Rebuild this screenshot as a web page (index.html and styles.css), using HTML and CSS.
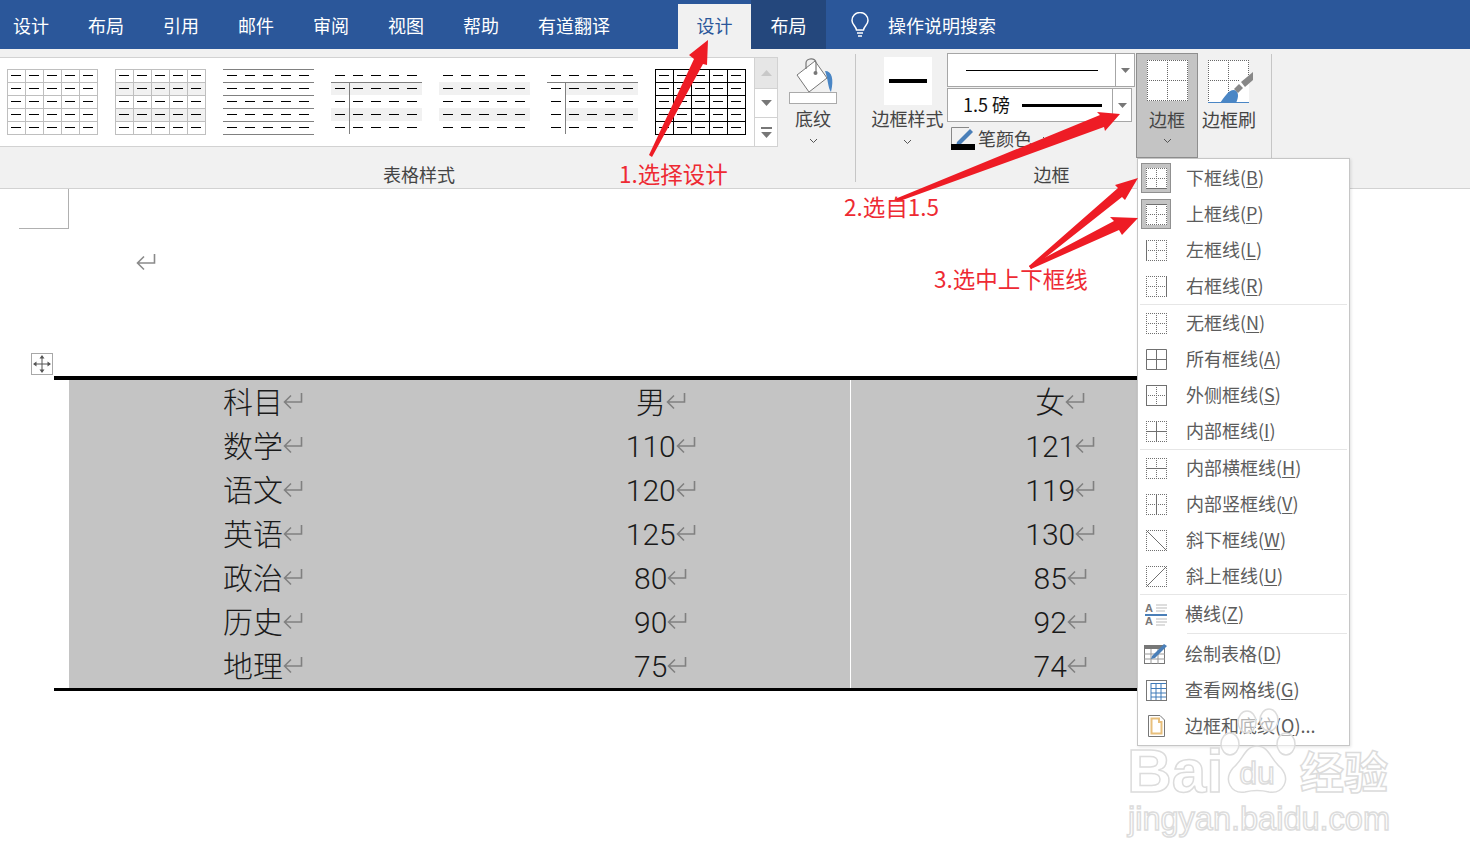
FILE: index.html
```html
<!DOCTYPE html>
<html lang="zh-CN">
<head>
    <meta charset="UTF-8">
    <meta name="viewport" content="width=device-width, initial-scale=1.0">
    <title>表格边框设置</title>
    <link rel="stylesheet" href="styles.css">
</head>
<body>
    <!-- shared svg pieces -->
    <svg class="defs" width="0" height="0">
        <defs>
            <pattern id="dash" width="18" height="13" patternUnits="userSpaceOnUse">
                <rect x="4" y="6" width="10" height="1" fill="#000"/>
            </pattern>
            <symbol id="ret" viewBox="0 0 20 18">
                <path d="M18.5 1V10H2M8 3.5L1.5 10L8 16.5" fill="none" stroke="currentColor" stroke-width="1.6"/>
            </symbol>
            <symbol id="chev" viewBox="0 0 9 6">
                <path d="M1 1L4.5 4.5L8 1" fill="none" stroke="#555" stroke-width="1"/>
            </symbol>
            <symbol id="drop" viewBox="0 0 9 5">
                <path d="M0 0H9L4.5 5Z" fill="#777"/>
            </symbol>
            <symbol id="bd" viewBox="0 0 21 21">
                <path class="dots" d="M0 .5H21M0 10.5H21M0 20.5H21M.5 0V21M10.5 0V21M20.5 0V21"/>
            </symbol>
        </defs>
    </svg>

    <header class="tabs">
        <span class="tab">设计</span>
        <span class="tab">布局</span>
        <span class="tab">引用</span>
        <span class="tab">邮件</span>
        <span class="tab">审阅</span>
        <span class="tab">视图</span>
        <span class="tab">帮助</span>
        <span class="tab">有道翻译</span>
        <span class="tab-active">设计</span>
        <span class="tab-dark">布局</span>
        <span class="tab-search">
            <svg width="20" height="26" viewBox="0 0 20 26" fill="none" stroke="#fff" stroke-width="1.5">
                <path d="M6.5 18C6 14 2 12.500 2 8.500A8 8 0 0 1 18 8.500C18 12.500 14 14 13.500 18Z"/>
                <path d="M7 21H13M8 24H12"/>
            </svg>
            操作说明搜索
        </span>
    </header>

    <section class="ribbon">
        <div class="group-styles">
            <div class="group-top styles-top">
                <div class="gallery">
                    <svg class="thumb" viewBox="0 0 91 66">
                        <rect width="91" height="66" fill="url(#dash)"/>
                        <path class="line-light" d="M.5 0V66M18.5 0V66M36.500 0V66M54.500 0V66M72.500 0V66M90.500 0V66M0 .5H91M0 13.500H91M0 26.500H91M0 39.500H91M0 52.500H91M0 65.500H91"/>
                    </svg>
                    <svg class="thumb" viewBox="0 0 91 66">
                        <rect y="13" width="91" height="13" fill="#f1f1f1"/>
                        <rect y="39" width="91" height="13" fill="#f1f1f1"/>
                        <rect width="91" height="66" fill="url(#dash)"/>
                        <path class="line-light" d="M.5 0V66M18.5 0V66M36.500 0V66M54.500 0V66M72.500 0V66M90.500 0V66M0 .5H91M0 13.500H91M0 26.500H91M0 39.500H91M0 52.500H91M0 65.500H91"/>
                    </svg>
                    <svg class="thumb" viewBox="0 0 91 66">
                        <rect width="91" height="66" fill="url(#dash)"/>
                        <path class="line-dark" d="M0 .5H91M0 13.500H91M0 26.500H91M0 39.500H91M0 52.500H91M0 65.500H91"/>
                    </svg>
                    <svg class="thumb" viewBox="0 0 91 66">
                        <rect y="13" width="91" height="13" fill="#f1f1f1"/>
                        <rect y="39" width="91" height="13" fill="#f1f1f1"/>
                        <rect width="91" height="66" fill="url(#dash)"/>
                        <path class="line-dark" d="M0 13.500H91M18.500 13V65"/>
                    </svg>
                    <svg class="thumb" viewBox="0 0 91 66">
                        <rect y="13" width="91" height="13" fill="#f1f1f1"/>
                        <rect y="39" width="91" height="13" fill="#f1f1f1"/>
                        <rect width="91" height="66" fill="url(#dash)"/>
                    </svg>
                    <svg class="thumb" viewBox="0 0 91 66">
                        <rect x="18" y="13" width="73" height="13" fill="#f1f1f1"/>
                        <rect x="18" y="39" width="73" height="13" fill="#f1f1f1"/>
                        <rect width="91" height="66" fill="url(#dash)"/>
                        <path class="line-dark" d="M0 13.500H91M18.500 13V65"/>
                    </svg>
                    <svg class="thumb" viewBox="0 0 91 66">
                        <rect width="91" height="66" fill="url(#dash)"/>
                        <path class="line-black" d="M.5 0V66M18.5 0V66M36.500 0V66M54.500 0V66M72.500 0V66M90.500 0V66M0 .5H91M0 13.500H91M0 26.500H91M0 39.500H91M0 52.500H91M0 65.500H91"/>
                    </svg>
                </div>
                <div class="gallery-scroll">
                    <div class="scroll-btn scroll-off"><svg width="11" height="6" viewBox="0 0 11 6"><path d="M0 6H11L5.500 0Z" fill="#c8c8c8"/></svg></div>
                    <div class="scroll-btn"><svg class="drop" width="11" height="6"><use href="#drop"/></svg></div>
                    <div class="scroll-btn scroll-more">
                        <span class="more-bar"></span>
                        <svg class="drop" width="11" height="6"><use href="#drop"/></svg>
                    </div>
                </div>
                <div class="shade-btn">
                    <svg width="48" height="47" viewBox="0 0 48 47">
                        <path d="M36 14C43 14 45 22 42 35C39 31 39 22 36 14Z" fill="#4a86c5"/>
                        <path d="M8 18L26 4L38 21L20 35Z" fill="#fff" stroke="#777"/>
                        <path d="M17 12V6C17 1 27 0 27 6V16" fill="none" stroke="#777" stroke-width="1.2"/>
                        <circle cx="26.500" cy="16" r="2" fill="#777"/>
                        <rect x=".5" y="35.500" width="47" height="11" fill="#fff" stroke="#aaa"/>
                    </svg>
                    <span class="btn-label">底纹</span>
                    <svg class="chev" width="9" height="6"><use href="#chev"/></svg>
                </div>
            </div>
            <div class="group-label styles-label">表格样式</div>
        </div>
        <div class="group-sep"></div>
        <div class="group-borders">
            <div class="group-top borders-top">
                <div class="style-btn">
                    <div class="swatch"><span class="swatch-line"></span></div>
                    <span class="btn-label">边框样式</span>
                    <svg class="chev" width="9" height="6"><use href="#chev"/></svg>
                </div>
                <div class="pen-col">
                    <div class="combo combo-type">
                        <div class="combo-main"><span class="pen-thin"></span></div>
                        <div class="combo-drop"><svg width="9" height="5"><use href="#drop"/></svg></div>
                    </div>
                    <div class="combo combo-weight">
                        <div class="combo-main"><span class="weight-text">1.5 磅</span><span class="pen-thick"></span></div>
                        <div class="combo-drop"><svg width="9" height="5"><use href="#drop"/></svg></div>
                    </div>
                    <div class="pen-color">
                        <svg width="24" height="24" viewBox="0 0 24 24">
                            <path d="M.5 17V.5H18" fill="none" stroke="#888"/>
                            <path d="M6 15L19 2L22 5L9 18L5 19Z" fill="#4a7fb8"/>
                            <rect y="17" width="24" height="6" fill="#000"/>
                        </svg>
                        <span>笔颜色</span>
                        <svg class="chev" width="9" height="6"><use href="#chev"/></svg>
                    </div>
                </div>
                <div class="borders-btn">
                    <svg width="41" height="41" viewBox="0 0 41 41">
                        <rect width="41" height="41" fill="#fff"/>
                        <path class="dots-dark" d="M0 .5H41M0 20.500H41M0 40.500H41M.5 0V41M20.500 0V41M40.500 0V41"/>
                    </svg>
                    <span class="btn-label">边框</span>
                    <svg class="chev" width="9" height="6"><use href="#chev"/></svg>
                </div>
                <div class="brush-btn">
                    <svg width="46" height="44" viewBox="0 0 46 44">
                        <rect width="41" height="42" fill="#fff"/>
                        <path class="dots-dark" d="M0 .5H41M0 20.500H32M.5 0V42M20.500 0V36M40.500 0V16"/>
                        <path d="M0 42.500H41" stroke="#4a86c5" fill="none"/>
                        <path d="M12 43C16 38 20 30 26 30C31 31 31 37 28 43Z" fill="#4a86c5"/>
                        <path d="M26 29L31 24L35 28L30 33Z" fill="#888"/>
                        <path d="M33 22L45 12L45 20L37 27Z" fill="#888"/>
                    </svg>
                    <span class="btn-label">边框刷</span>
                </div>
            </div>
            <div class="group-label borders-label">边框</div>
        </div>
        <div class="group-sep sep-short"></div>
    </section>

    <main class="doc">
        <div class="page-corner"></div>
        <svg class="page-ret" width="20" height="18"><use href="#ret"/></svg>
        <div class="move-handle">
            <svg width="18" height="18" viewBox="0 0 18 18">
                <path d="M9 1V17M1 9H17" stroke="#555" fill="none"/>
                <path d="M9 0L11.500 3.500H6.500ZM9 18L11.500 14.500H6.500ZM0 9L3.500 6.500V11.500ZM18 9L14.500 6.500V11.500Z" fill="#555"/>
            </svg>
        </div>
        <div class="table-wrap">
            <table class="score-table">
                <tr><td>科目<svg class="ret"><use href="#ret"/></svg></td><td>男<svg class="ret"><use href="#ret"/></svg></td><td>女<svg class="ret"><use href="#ret"/></svg></td></tr>
                <tr><td>数学<svg class="ret"><use href="#ret"/></svg></td><td>110<svg class="ret"><use href="#ret"/></svg></td><td>121<svg class="ret"><use href="#ret"/></svg></td></tr>
                <tr><td>语文<svg class="ret"><use href="#ret"/></svg></td><td>120<svg class="ret"><use href="#ret"/></svg></td><td>119<svg class="ret"><use href="#ret"/></svg></td></tr>
                <tr><td>英语<svg class="ret"><use href="#ret"/></svg></td><td>125<svg class="ret"><use href="#ret"/></svg></td><td>130<svg class="ret"><use href="#ret"/></svg></td></tr>
                <tr><td>政治<svg class="ret"><use href="#ret"/></svg></td><td>80<svg class="ret"><use href="#ret"/></svg></td><td>85<svg class="ret"><use href="#ret"/></svg></td></tr>
                <tr><td>历史<svg class="ret"><use href="#ret"/></svg></td><td>90<svg class="ret"><use href="#ret"/></svg></td><td>92<svg class="ret"><use href="#ret"/></svg></td></tr>
                <tr><td>地理<svg class="ret"><use href="#ret"/></svg></td><td>75<svg class="ret"><use href="#ret"/></svg></td><td>74<svg class="ret"><use href="#ret"/></svg></td></tr>
            </table>
        </div>
    </main>

    <!-- dropdown of the 边框 button -->
    <nav class="border-menu">
        <div class="menu-item"><span class="icon-box on"><svg class="bi"><use href="#bd"/><path d="M0 20.500H21"/></svg></span><span>下框线(<u>B</u>)</span></div>
        <div class="menu-item"><span class="icon-box on"><svg class="bi"><use href="#bd"/><path d="M0 .5H21"/></svg></span><span>上框线(<u>P</u>)</span></div>
        <div class="menu-item"><span class="icon-box"><svg class="bi"><use href="#bd"/><path d="M.5 0V21"/></svg></span><span>左框线(<u>L</u>)</span></div>
        <div class="menu-item"><span class="icon-box"><svg class="bi"><use href="#bd"/><path d="M20.500 0V21"/></svg></span><span>右框线(<u>R</u>)</span></div>
        <div class="menu-sep"></div>
        <div class="menu-item"><span class="icon-box"><svg class="bi"><use href="#bd"/></svg></span><span>无框线(<u>N</u>)</span></div>
        <div class="menu-item"><span class="icon-box"><svg class="bi"><path d="M.5 .5H20.500V20.500H.5ZM0 10.500H21M10.500 0V21"/></svg></span><span>所有框线(<u>A</u>)</span></div>
        <div class="menu-item"><span class="icon-box"><svg class="bi"><use href="#bd"/><path d="M.5 .5H20.500V20.500H.5Z"/></svg></span><span>外侧框线(<u>S</u>)</span></div>
        <div class="menu-item"><span class="icon-box"><svg class="bi"><use href="#bd"/><path d="M0 10.500H21M10.500 0V21"/></svg></span><span>内部框线(<u>I</u>)</span></div>
        <div class="menu-sep"></div>
        <div class="menu-item"><span class="icon-box"><svg class="bi"><use href="#bd"/><path d="M0 10.500H21"/></svg></span><span>内部横框线(<u>H</u>)</span></div>
        <div class="menu-item"><span class="icon-box"><svg class="bi"><use href="#bd"/><path d="M10.500 0V21"/></svg></span><span>内部竖框线(<u>V</u>)</span></div>
        <div class="menu-item"><span class="icon-box"><svg class="bi"><path class="dots" d="M0 .5H21M0 20.500H21M.5 0V21M20.500 0V21"/><path d="M0 0L21 21"/></svg></span><span>斜下框线(<u>W</u>)</span></div>
        <div class="menu-item"><span class="icon-box"><svg class="bi"><path class="dots" d="M0 .5H21M0 20.500H21M.5 0V21M20.500 0V21"/><path d="M0 21L21 0"/></svg></span><span>斜上框线(<u>U</u>)</span></div>
        <div class="menu-sep"></div>
        <div class="menu-item item-tight">
            <span class="icon-box">
                <svg width="23" height="23" viewBox="0 0 23 23">
                    <text x="0" y="9" class="icon-a">A</text>
                    <text x="0" y="22" class="icon-a">A</text>
                    <path d="M11 2H22M11 5H22M11 8H20M11 16H22M11 19H22M11 22H20" stroke="#bbb" fill="none"/>
                    <path d="M0 12H22" stroke="#4a7fb8" stroke-width="2" fill="none"/>
                </svg>
            </span>
            <span>横线(<u>Z</u>)</span>
        </div>
        <div class="menu-sep sep-indent"></div>
        <div class="menu-item item-tight">
            <span class="icon-box">
                <svg width="24" height="22" viewBox="0 0 24 22">
                    <rect x=".5" y="2.500" width="20" height="18" fill="#fff" stroke="#777"/>
                    <rect y="2" width="21" height="4" fill="#777"/>
                    <path d="M0 11H21M0 16H21M7 6V21M14 6V21" stroke="#999" fill="none"/>
                    <path d="M8 13L20 1L23 3L11 15L7 16Z" fill="#4a7fb8"/>
                </svg>
            </span>
            <span>绘制表格(<u>D</u>)</span>
        </div>
        <div class="menu-item item-tight">
            <span class="icon-box">
                <svg width="21" height="21" viewBox="0 0 21 21">
                    <rect x=".5" y=".5" width="20" height="20" fill="#fff" stroke="#777"/>
                    <path d="M5 3.500H20M5 8.500H20M5 13H20M5 17H20M5 3V20M10 3V20M15 3V20" stroke="#3f7ab8" fill="none"/>
                </svg>
            </span>
            <span>查看网格线(<u>G</u>)</span>
        </div>
        <div class="menu-item item-tight">
            <span class="icon-box">
                <svg width="17" height="22" viewBox="0 0 17 22">
                    <path d="M.5 .5H12L16.500 5V21.500H.5Z" fill="#fff" stroke="#777"/>
                    <path d="M3.500 3.500H11V7H13.500V18.500H3.500Z" fill="none" stroke="#e8bf7c" stroke-width="2"/>
                </svg>
            </span>
            <span>边框和底纹(<u>O</u>)...</span>
        </div>
    </nav>

    <!-- red notes drawn on top of the screenshot -->
    <svg class="arrows" width="1470" height="867" viewBox="0 0 1470 867">
        <path d="M649 155L652 157L703 64L707 65L708 40L689 55L694 59Z"/>
        <path d="M895 199L897 202L1104 127L1105 131L1120 114L1097 112L1100 115Z"/>
        <path d="M1029 266L1031 269L1122 197L1125 200L1138 178L1115 185L1118 188Z"/>
        <path d="M1029 266L1031 269L1119 230L1122 235L1138 218L1110 217L1114 221Z"/>
    </svg>
    <div class="note note-1">1.选择设计</div>
    <div class="note note-2">2.选自1.5</div>
    <div class="note note-3">3.选中上下框线</div>

    <div class="watermark">
        <svg class="paw" width="80" height="90" viewBox="0 0 80 90">
            <ellipse cx="13" cy="36" rx="9" ry="11"/>
            <ellipse cx="30" cy="14" rx="9" ry="11"/>
            <ellipse cx="52" cy="12" rx="9" ry="11"/>
            <ellipse cx="69" cy="36" rx="9" ry="11"/>
            <path d="M40 38C52 38 54 52 64 60C74 72 66 86 52 84C44 82 36 82 28 84C14 86 6 72 16 60C26 52 28 38 40 38Z"/>
            <text x="40" y="76" text-anchor="middle" class="paw-text">du</text>
        </svg>
        <span class="wm-bai">Bai</span>
        <span class="wm-cn">经验</span>
        <span class="wm-url">jingyan.baidu.com</span>
    </div>
</body>
</html>
```
FILE: styles.css
```css
* {
    box-sizing: border-box;
}
html, body {
    margin: 0;
    height: 867px;
    overflow: hidden;
}
body {
    position: relative;
    background: #fff;
    font-family: "Noto Sans CJK SC", "Liberation Sans", sans-serif;
    font-size: 18px;
    color: #444;
}
.defs {
    position: absolute;
}

/* tab bar */
.tabs {
    display: flex;
    align-items: flex-end;
    height: 49px;
    padding-left: 13px;
    background: #2b579a;
    color: #fff;
}
.tab {
    height: 49px;
    line-height: 50px;
    margin-right: 39px;
}
.tab:nth-child(8) {
    margin-right: 68px;
}
.tab-active {
    height: 45px;
    line-height: 42px;
    padding: 0 18.5px;
    background: #f1f1f1;
    color: #2b579a;
}
.tab-dark {
    height: 49px;
    line-height: 50px;
    padding: 0 19.5px;
    background: #24477c;
}
.tab-search {
    display: flex;
    align-items: center;
    gap: 18px;
    height: 49px;
    margin-left: 24px;
    padding-top: 1px;
}

/* ribbon */
.ribbon {
    display: flex;
    height: 140px;
    background: #f1f1f1;
    border-bottom: 1px solid #d2d2d2;
}
.group-top {
    display: flex;
    height: 109px;
}
.group-label {
    margin-top: 3px;
    line-height: 26px;
    text-align: center;
}
.group-styles {
    width: 855px;
}
.styles-top {
    padding-top: 8px;
}
.styles-label {
    padding-right: 17px;
}
.group-sep {
    width: 1px;
    margin: 5px 0 6px;
    background: #c6c6c6;
}
.sep-short {
    height: 105px;
}
.gallery {
    display: flex;
    gap: 17px;
    width: 755px;
    height: 90px;
    padding: 11px 0 0 7px;
    background: #fff;
    border: 1px solid #d2d2d2;
    border-left: none;
}
.thumb {
    width: 91px;
    height: 66px;
    flex: none;
    shape-rendering: crispEdges;
}
.line-light, .line-dark, .line-black {
    fill: none;
    stroke-width: 1;
}
.line-light {
    stroke: #bfbfbf;
}
.line-dark {
    stroke: #808080;
}
.line-black {
    stroke: #000;
}
.gallery-scroll {
    display: flex;
    flex-direction: column;
    width: 23px;
    height: 90px;
}
.scroll-btn {
    display: flex;
    flex-direction: column;
    align-items: center;
    justify-content: center;
    gap: 3px;
    height: 29px;
    background: #fff;
    border: 1px solid #d2d2d2;
    border-top: none;
    border-left: none;
}
.scroll-off {
    height: 32px;
    background: #e6e6e6;
    border-top: 1px solid #d2d2d2;
}
.more-bar {
    width: 11px;
    height: 2px;
    background: #777;
}
.shade-btn {
    display: flex;
    flex-direction: column;
    align-items: center;
    width: 70px;
    padding: 0;
}
.btn-label {
    line-height: 26px;
    white-space: nowrap;
}
.shade-btn .btn-label {
    margin-top: 1px;
}
.chev {
    display: block;
    flex: none;
}
.shade-btn .chev, .style-btn .chev {
    margin-top: 7px;
}

.group-borders {
    width: 415px;
}
.borders-top {
    padding-top: 4px;
}
.borders-label {
    padding-right: 24px;
}
.style-btn {
    display: flex;
    flex-direction: column;
    align-items: center;
    width: 91px;
    padding: 4px 0 0 12px;
}
.swatch {
    display: flex;
    align-items: center;
    justify-content: center;
    width: 48px;
    height: 48px;
    background: #fff;
}
.swatch-line {
    width: 38px;
    height: 4px;
    background: #000;
}
.style-btn .btn-label {
    margin-top: 0;
}
.style-btn .chev {
    margin-top: 8px;
}
.pen-col {
    width: 189px;
}
.combo {
    display: flex;
    background: #fff;
    border: 1px solid #a6a6a6;
}
.combo-type {
    width: 188px;
    height: 34px;
    margin-bottom: 1px;
}
.combo-weight {
    width: 185px;
    height: 34px;
}
.combo-main {
    display: flex;
    flex: 1;
    align-items: center;
}
.combo-type .combo-main {
    padding-left: 18px;
}
.combo-weight .combo-main {
    padding-left: 15px;
}
.combo-drop {
    display: flex;
    align-items: center;
    justify-content: center;
    width: 19px;
    border-left: 1px solid #a6a6a6;
}
.pen-thin {
    width: 132px;
    height: 1px;
    background: #000;
}
.pen-thick {
    width: 80px;
    height: 3px;
    margin-left: 12px;
    background: #000;
}
.weight-text {
    margin-top: -3px;
    color: #111;
    white-space: nowrap;
}
.pen-color {
    display: flex;
    align-items: center;
    gap: 3px;
    margin: 5px 0 0 4px;
    line-height: 24px;
}
.pen-color span {
    margin-top: -3px;
}
.pen-color .chev {
    margin-left: 7px;
}
.borders-btn {
    display: flex;
    flex-direction: column;
    align-items: center;
    width: 62px;
    height: 105px;
    padding-top: 6px;
    background: #c4c4c4;
    border: 1px solid #8f8f8f;
}
.borders-btn .btn-label {
    margin-top: 5px;
}
.borders-btn .chev {
    margin-top: 6px;
}
.brush-btn {
    display: flex;
    flex-direction: column;
    align-items: center;
    width: 62px;
    padding-top: 7px;
}
.brush-btn svg {
    margin-left: 4px;
}
.brush-btn .btn-label {
    margin-top: 2px;
}
.dots, .dots-dark {
    fill: none;
    stroke-width: 1;
    stroke-dasharray: 1 1;
    shape-rendering: crispEdges;
}
.dots {
    stroke: #707070;
}
.dots-dark {
    stroke: #666;
}

/* document */
.page-corner {
    width: 50px;
    height: 40px;
    margin-left: 19px;
    border-right: 1px solid #b0b0b0;
    border-bottom: 1px solid #b0b0b0;
}
.page-ret {
    display: block;
    margin: 24px 0 0 136px;
    color: #8a8a8a;
}
.move-handle {
    display: flex;
    align-items: center;
    justify-content: center;
    width: 22px;
    height: 22px;
    margin: 82px 0 1px 31px;
    border: 1px solid #a8a8a8;
}
.table-wrap {
    width: 1216px;
    margin-left: 54px;
    padding-left: 15px;
    border-top: 4px solid #000;
    border-bottom: 3px solid #000;
}
.score-table {
    width: 1201px;
    border-collapse: collapse;
    table-layout: fixed;
    background: #c4c4c4;
    color: #1a1a1a;
    font-family: Roboto, "Noto Sans CJK SC", sans-serif;
    font-weight: 300;
    font-size: 30px;
}
.score-table td {
    height: 44px;
    padding: 0;
    text-align: center;
    white-space: nowrap;
    line-height: 43px;
}
.score-table td:nth-child(1) {
    width: 403px;
    padding-right: 15px;
}
.score-table td:nth-child(2) {
    width: 378px;
}
.score-table td:nth-child(3) {
    border-left: 1px solid #fff;
}
.ret {
    width: 20px;
    height: 18px;
    color: #808080;
    vertical-align: 3px;
}

/* dropdown */
.border-menu {
    position: absolute;
    left: 1137px;
    top: 158px;
    width: 213px;
    height: 588px;
    background: #fff;
    border: 1px solid #c6c6c6;
    box-shadow: 1px 1px 3px rgba(0, 0, 0, 0.12);
    color: #5c5c5c;
}
.menu-item {
    display: flex;
    align-items: center;
    gap: 15px;
    height: 36px;
    padding-left: 3px;
    white-space: nowrap;
}
.menu-item:first-child {
    margin-top: 1px;
}
.menu-item span:last-child {
    margin-top: -2px;
}
.menu-item u {
    text-underline-offset: 2px;
}
.item-tight {
    gap: 14px;
}
.icon-box {
    display: flex;
    align-items: center;
    justify-content: center;
    width: 30px;
    height: 30px;
    flex: none;
}
.icon-box.on {
    background: #c4c4c4;
    border: 1px solid #909090;
}
.icon-box.on .bi {
    background: #fff;
}
.bi {
    width: 21px;
    height: 21px;
    fill: none;
    stroke: #707070;
    stroke-width: 1;
}
.menu-sep {
    height: 1px;
    margin: 0 2px;
    background: #e6e6e6;
}
.menu-sep + .item-tight {
    margin-top: 1px;
}
.sep-indent {
    margin: 1px 2px 2px 49px;
}
.sep-indent + .item-tight {
    margin-top: 0;
}
.icon-a {
    font-family: "Liberation Sans", sans-serif;
    font-size: 11px;
    font-weight: 700;
    fill: #777;
}

/* red notes */
.arrows {
    position: absolute;
    left: 0;
    top: 0;
    fill: #ee1c25;
    pointer-events: none;
}
.note {
    position: absolute;
    color: #ee2a33;
    font-size: 22.5px;
    line-height: 30px;
    white-space: nowrap;
}
.note-1 {
    left: 619px;
    top: 158px;
}
.note-2 {
    left: 844px;
    top: 191px;
}
.note-3 {
    left: 934px;
    top: 263px;
}

/* baidu watermark */
.watermark {
    position: absolute;
    left: 1125px;
    top: 708px;
    width: 275px;
    height: 135px;
    color: #fff;
    -webkit-text-stroke: 1.5px #dcdcdc;
    font-family: "Liberation Sans", sans-serif;
    pointer-events: none;
}
.paw {
    position: absolute;
    left: 92px;
    top: 0;
    fill: #fff;
    fill-opacity: 0.55;
    stroke: #dcdcdc;
    stroke-width: 1.5;
}
.paw-text {
    font-size: 32px;
    fill: #fff;
}
.wm-bai {
    position: absolute;
    left: 2px;
    top: 28px;
    font-size: 62px;
    font-weight: 700;
    line-height: 70px;
}
.wm-cn {
    position: absolute;
    left: 175px;
    top: 34px;
    font-family: "Noto Sans CJK SC", sans-serif;
    font-size: 44px;
    font-weight: 700;
    line-height: 56px;
}
.wm-url {
    position: absolute;
    left: 3px;
    top: 92px;
    font-size: 32.5px;
    line-height: 38px;
    white-space: nowrap;
}
```
